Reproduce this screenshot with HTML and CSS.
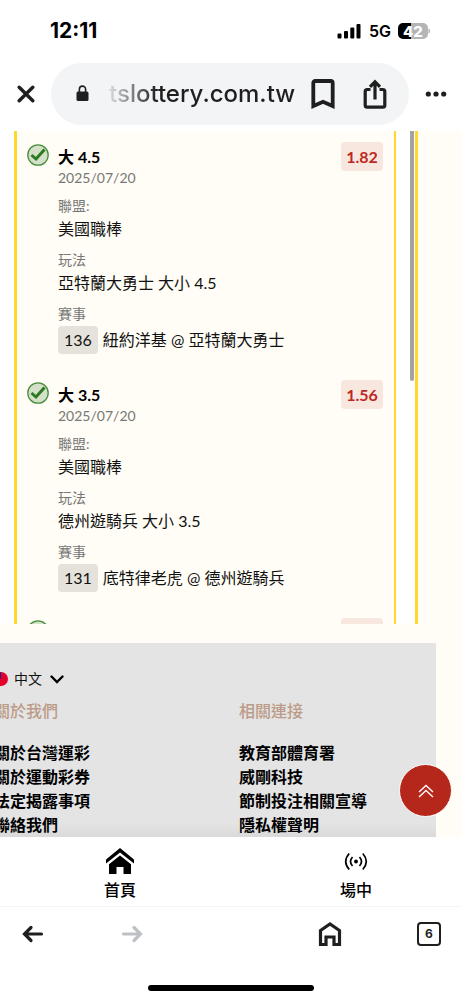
FILE: index.html
```html
<!DOCTYPE html>
<html lang="zh-Hant">
<head>
<meta charset="utf-8">
<meta name="viewport" content="width=device-width, initial-scale=1">
<title>台灣運彩</title>
<link rel="stylesheet" href="styles.css">
</head>
<body>
<div class="screen">
  <div class="status">
    <span class="time">12:11</span>
    <div class="signals">
      <svg class="bars" width="24" height="16" viewBox="0 0 24 16"><rect x="0.500" y="10.500" width="4" height="5" rx="1"/><rect x="7" y="8" width="4" height="7.500" rx="1"/><rect x="13.300" y="4.500" width="4" height="11" rx="1"/><rect x="19.500" y="1" width="4" height="14.500" rx="1"/></svg>
      <span class="network">5G</span>
      <span class="battery">42</span>
      <svg width="3" height="6" viewBox="0 0 3 6"><path d="M0.500 0.500Q2.300 1 2.300 3T0.500 5.500z" fill="#b5b5b5"/></svg>
    </div>
  </div>

  <header class="toolbar">
    <button class="icon-btn" aria-label="關閉"><svg width="18" height="18" viewBox="0 0 18 18"><path d="M2.200 2.200l13.600 13.600M15.800 2.200L2.200 15.800" stroke="#1f1f1f" stroke-width="3.400" stroke-linecap="round"/></svg></button>
    <div class="address">
      <svg class="lock" width="14" height="17" viewBox="0 0 14 17"><rect x="0.500" y="6.500" width="12" height="9.500" rx="1.500" fill="#1f1f1f"/><path d="M3.400 7V4.200a3.100 3.100 0 0 1 6.200 0V7" fill="none" stroke="#1f1f1f" stroke-width="1.600"/></svg>
      <span class="url">tslottery.com.tw</span>
      <button class="icon-btn" aria-label="書籤"><svg width="24" height="30" viewBox="0 0 24 30"><path d="M2.300 27V4q0-2 2-2h15.400q2 0 2 2v23L12 22.800z" fill="none" stroke="#1f1f1f" stroke-width="3.800"/></svg></button>
      <button class="icon-btn" aria-label="分享"><svg width="24" height="32" viewBox="0 0 24 32"><path d="M7.500 11.500H4.200q-2 0-2 2v13.700q0 2 2 2h15.600q2 0 2-2V13.500q0-2-2-2h-3.300" fill="none" stroke="#1f1f1f" stroke-width="3.200"/><path d="M12 21.500V4.500M7 8.800l5-5 5 5" fill="none" stroke="#1f1f1f" stroke-width="3.200"/></svg></button>
    </div>
    <button class="icon-btn" aria-label="更多"><svg width="22" height="6" viewBox="0 0 22 6" fill="#1f1f1f"><circle cx="3.300" cy="3" r="2.600"/><circle cx="11" cy="3" r="2.600"/><circle cx="18.700" cy="3" r="2.600"/></svg></button>
  </header>

  <main class="page">
    <section class="slip">
      <div class="bets">
        <article class="bet">
          <svg class="check" width="22" height="22" viewBox="0 0 22 22"><circle cx="11" cy="11" r="10.200" fill="#d5e0c9" stroke="#478f3c" stroke-width="1.300"/><path d="M4.500 11l4.500 4 8.500-9.500" fill="none" stroke="#2c7a20" stroke-width="3"/></svg>
          <div class="details">
            <h2>大 4.5</h2>
            <time>2025/07/20</time>
            <dl>
              <dt>聯盟:</dt><dd>美國職棒</dd>
              <dt>玩法</dt><dd>亞特蘭大勇士 大小 4.5</dd>
              <dt>賽事</dt><dd class="match"><span class="code">136</span>紐約洋基 @ 亞特蘭大勇士</dd>
            </dl>
          </div>
          <span class="odds">1.82</span>
        </article>
        <article class="bet">
          <svg class="check" width="22" height="22" viewBox="0 0 22 22"><circle cx="11" cy="11" r="10.200" fill="#d5e0c9" stroke="#478f3c" stroke-width="1.300"/><path d="M4.500 11l4.500 4 8.500-9.500" fill="none" stroke="#2c7a20" stroke-width="3"/></svg>
          <div class="details">
            <h2>大 3.5</h2>
            <time>2025/07/20</time>
            <dl>
              <dt>聯盟:</dt><dd>美國職棒</dd>
              <dt>玩法</dt><dd>德州遊騎兵 大小 3.5</dd>
              <dt>賽事</dt><dd class="match"><span class="code">131</span>底特律老虎 @ 德州遊騎兵</dd>
            </dl>
          </div>
          <span class="odds">1.56</span>
        </article>
        <article class="bet">
          <svg class="check" width="22" height="22" viewBox="0 0 22 22"><circle cx="11" cy="11" r="10.200" fill="#d5e0c9" stroke="#478f3c" stroke-width="1.300"/></svg>
          <div class="details"></div>
          <span class="odds"></span>
        </article>
      </div>
      <div class="track"><div class="thumb"></div></div>
    </section>

    <footer class="footer">
      <button class="language">
        <svg width="14" height="14" viewBox="0 0 14 14"><circle cx="7" cy="7" r="7" fill="#e4002b"/><path d="M0 7a7 7 0 0 1 7-7v7z" fill="#1b2a8a"/></svg>
        <span>中文</span>
        <svg class="chevron" width="14" height="9" viewBox="0 0 14 9"><path d="M1.500 1.500L7 7l5.500-5.500" fill="none" stroke="#000" stroke-width="2.400" stroke-linecap="round"/></svg>
      </button>
      <div class="columns">
        <nav>
          <h3>關於我們</h3>
          <a href="#">關於台灣運彩</a><a href="#">關於運動彩券</a><a href="#">法定揭露事項</a><a href="#">聯絡我們</a>
        </nav>
        <nav>
          <h3>相關連接</h3>
          <a href="#">教育部體育署</a><a href="#">威剛科技</a><a href="#">節制投注相關宣導</a><a href="#">隱私權聲明</a>
        </nav>
      </div>
    </footer>
    <button class="to-top" aria-label="回到頂部"><svg width="16" height="14" viewBox="0 0 16 14"><path d="M1 8l7-6.500L15 8M1 13l7-6.500L15 13" fill="none" stroke="#fff" stroke-width="1.300"/></svg></button>
  </main>

  <nav class="tabs">
    <a href="#"><svg width="30" height="28" viewBox="0 0 30 28"><path d="M1 12.500L15 1l14 11.500v4L15 5.500 1 16.500z"/><path d="M4 17.200L15 8.500l11 8.700V27h-7.500v-7h-7v7H4z"/></svg><span>首頁</span></a>
    <a href="#"><svg width="24" height="28" viewBox="0 0 24 28" fill="none" stroke="#000" stroke-width="1.700"><circle cx="12" cy="14.500" r="1.900" fill="#000" stroke="none"/><path d="M8.500 10q-4 4.500 0 9M15.500 10q4 4.500 0 9M5.200 6.500q-7 8 0 16M18.800 6.500q7 8 0 16"/></svg><span>場中</span></a>
  </nav>

  <div class="browser-bar">
    <button class="icon-btn" aria-label="上一頁"><svg width="22" height="20" viewBox="0 0 22 20"><path d="M19.500 10H3M9 3.500L2.500 10 9 16.500" fill="none" stroke="#1f1f1f" stroke-width="3.200" stroke-linecap="round"/></svg></button>
    <button class="icon-btn" aria-label="下一頁" disabled><svg width="22" height="20" viewBox="0 0 22 20"><path d="M2.500 10H19M13 3.500l6.500 6.500-6.500 6.500" fill="none" stroke="#bdc1c6" stroke-width="3.200" stroke-linecap="round"/></svg></button>
    <span></span>
    <button class="icon-btn" aria-label="主頁"><svg width="24" height="26" viewBox="0 0 24 26"><path d="M2.500 23.500V9.500L12 3l9.500 6.500v14H16v-7.500H8v7.500z" fill="none" stroke="#1f1f1f" stroke-width="3.200"/></svg></button>
    <button class="tab-count" aria-label="分頁">6</button>
  </div>
  <div class="home-indicator"></div>
</div>
</body>
</html>
```

FILE: styles.css
```css
* { box-sizing: border-box; }
body { margin: 0; background: #fff; color: #111; font: 16px/24px Lato, "Noto Sans CJK TC", sans-serif; }
button { margin: 0; padding: 0; border: 0; background: none; font: inherit; color: inherit; }
a { color: inherit; text-decoration: none; }
h2, h3, dl, dd { margin: 0; }
svg { display: block; flex: none; }

.screen { display: flex; flex-direction: column; height: 100vh; overflow: hidden; }

.status { display: flex; flex: none; justify-content: space-between; align-items: center; height: 62px; padding: 0 31px 0 50px; font-family: Inter, sans-serif; color: #000; }
.time { font-size: 21px; font-weight: 700; }
.signals { display: flex; align-items: center; }
.network { margin: 0 7px 0 8px; font-size: 16px; font-weight: 600; }
.battery { width: 30px; height: 16px; border-radius: 5px; background: linear-gradient(90deg, #000 42%, #b5b5b5 42%); color: #fff; font-size: 15px; font-weight: 800; line-height: 17px; text-align: center; }

.toolbar { display: flex; flex: none; align-items: center; gap: 16px; height: 69px; padding: 0 15px 6px 17px; }
.icon-btn { display: flex; align-items: center; justify-content: center; }
.address { display: flex; flex: 1; min-width: 0; align-items: center; gap: 14px; height: 62px; padding: 0 22px 0 25px; border-radius: 31px; background: #f3f4f6; }
.lock { margin-right: 5px; }
.address .icon-btn:last-child { margin-left: 14px; }
.url { flex: 1; overflow: hidden; background: linear-gradient(90deg, #dcdddf, #1f1f1f 48px); background-clip: text; color: transparent; font: 500 24px/32px Inter, sans-serif; white-space: nowrap; }

.page { position: relative; flex: 1; min-height: 0; overflow: hidden; background: #fffdf5; }
.slip { display: flex; height: 493px; margin-right: 44px; padding-left: 14px; border-right: 3px solid #ffd82e; background: #fff; overflow: hidden; }
.bets { flex: 1; border-left: 3px solid #ffd82e; border-right: 2px solid #ffd82e; background: #fffdf5; }
.track { width: 19px; padding-left: 14px; }
.thumb { width: 4px; height: 250px; border-radius: 0 0 2px 2px; background: #a3a3a3; }

.bet { display: flex; align-items: flex-start; height: 238px; padding: 11px 11px 0 10px; }
.check { margin: 2px 9px 0 0; }
.details { flex: 1; padding-top: 4px; }
.details h2 { font-size: 16px; font-weight: 700; line-height: 22px; color: #000; }
.details time { display: block; font-size: 14px; line-height: 20px; color: #777; }
dt { margin-top: 8px; font-size: 14px; line-height: 20px; color: #777; }
dd { line-height: 26px; }
.match { display: flex; align-items: center; gap: 5px; padding-top: 2px; line-height: 28px; }
.code { padding: 0 6px; border-radius: 4px; background: #e5e2dc; }
.odds { width: 42px; height: 29px; border-radius: 4px; background: #f8e7df; color: #bd281f; font-weight: 700; line-height: 29px; text-align: center; }

.footer { height: 200px; margin: 19px 26px 0 -6px; padding-top: 25px; background: linear-gradient(#e4e4e4 180px, #d8d8d8 196px); }
.language { display: flex; align-items: center; gap: 6px; height: 22px; font-size: 14px; }
.chevron { margin-left: 2px; }
.columns { display: grid; grid-template-columns: 245px 1fr; padding-top: 9px; }
.columns h3 { margin-bottom: 18px; font-size: 16px; font-weight: 500; line-height: 24px; color: #bb9b87; }
.columns a { display: block; font-weight: 700; line-height: 24px; color: #000; }
.to-top { position: absolute; right: 10px; bottom: 20px; display: flex; align-items: center; justify-content: center; width: 53px; height: 53px; border: 1px solid #fff; border-radius: 50%; background: #b5271b; }

.tabs { display: grid; flex: none; grid-template-columns: 1fr 1fr; height: 70px; margin-right: -12px; padding: 10px 0 0 2px; border-bottom: 1px solid #f5f5f5; color: #000; }
.tabs a { display: flex; flex-direction: column; align-items: center; gap: 3px; font-weight: 500; }

.browser-bar { display: grid; flex: none; grid-template-columns: 66px 132px 1fr 132px 66px; align-items: center; justify-items: center; height: 54px; }
.tab-count { width: 24px; height: 24px; border: 2px solid #1f1f1f; border-radius: 4px; color: #1f1f1f; font: 700 12px/20px Inter, sans-serif; }
.home-indicator { flex: none; width: 36%; height: 6px; margin: 24px auto 9px; border-radius: 3px; background: #000; }
```
